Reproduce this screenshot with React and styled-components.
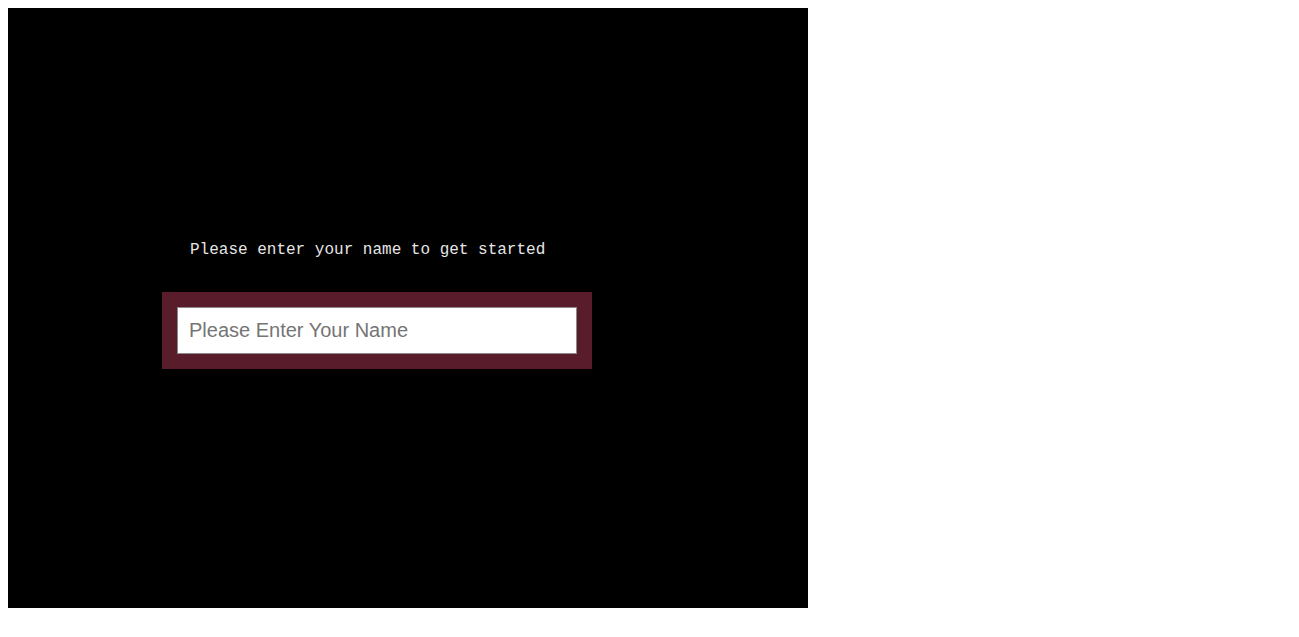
import React from "react";
import styled, { createGlobalStyle } from "styled-components";

const Global = createGlobalStyle`
  body {
    margin: 8px;
    background: #fff;
    font-family: "Liberation Sans", Arial, sans-serif;
  }
`;

const Screen = styled.div`
  width: 800px;
  height: 600px;
  background: #000;
  box-sizing: border-box;
  padding: 233px 0 0 154px;
  display: flex;
  flex-direction: column;
  align-items: flex-start;
`;

const Prompt = styled.p`
  margin: 0 0 33px 28px;
  font-family: "Liberation Mono", "Courier New", monospace;
  font-size: 16px;
  line-height: 18px;
  color: #e6e6e6;
`;

const NameForm = styled.form`
  background: #581c2a;
  padding: 15px;
  width: 430px;
  box-sizing: border-box;
`;

const NameInput = styled.input`
  display: block;
  width: 400px;
  height: 47px;
  box-sizing: border-box;
  border: 1px solid #8a8a8a;
  padding: 0 11px;
  font-family: "Liberation Sans", Arial, sans-serif;
  font-size: 20px;
  color: #222;
  background: #fff;
  outline: none;

  &::placeholder {
    color: #757575;
  }
`;

const App = () => {
  return (
    <>
      <Global />
      <Screen>
        <Prompt>Please enter your name to get started</Prompt>
        <NameForm onSubmit={(e) => e.preventDefault()}>
          <NameInput type="text" placeholder="Please Enter Your Name" />
        </NameForm>
      </Screen>
    </>
  );
};

export default App;
